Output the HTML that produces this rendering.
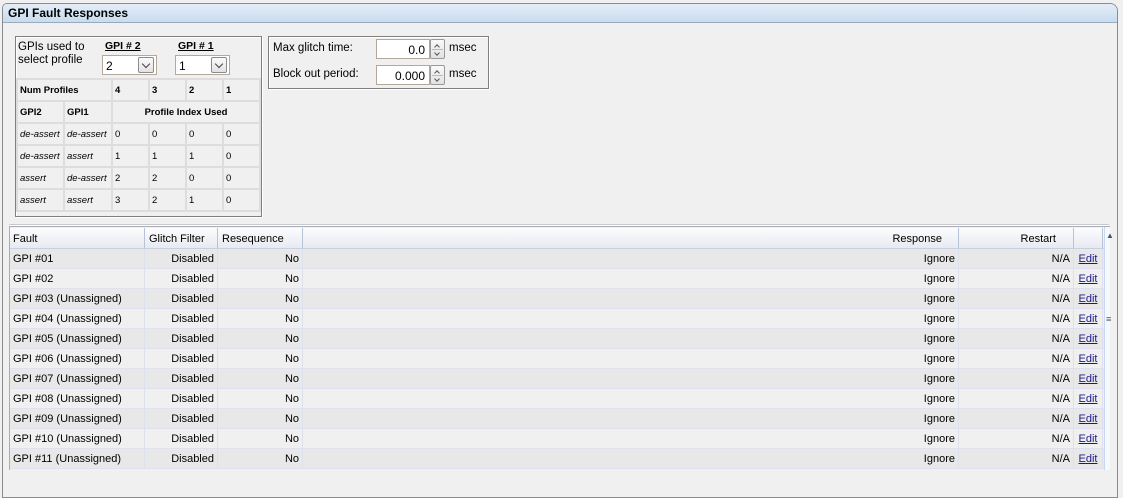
<!DOCTYPE html>
<html><head><meta charset="utf-8"><style>
*{box-sizing:border-box;margin:0;padding:0}
body{width:1123px;height:492px;background:#f0f0f0;font-family:"Liberation Sans",sans-serif;font-size:11px;color:#000;position:relative;overflow:hidden}
.abs{position:absolute}
#panel{left:2px;top:3px;width:1116px;height:495px;border:1px solid #8c8c8c;border-radius:5px 8px 0 0;background:#f0f0f0}
#title{left:3px;top:4px;width:1114px;height:19px;background:linear-gradient(#e4eef8,#c9dcef);border-bottom:1px solid #9aaabb;border-radius:4px 7px 0 0;font-weight:bold;font-size:12px;padding:2px 0 0 5px}
.box{border:1px solid #808080;box-shadow:inset 1px 1px 0 #fff,1px 1px 0 #fff}
.combo{border:1px solid #b4a89c;background:#fff;height:20px}
.combo span{position:absolute;left:3px;top:3px;font-size:12px}
.combo i{position:absolute;right:2px;top:1px;width:16px;height:16px;border:1px solid #8b8b8b;border-radius:2px;background:linear-gradient(#fafafa,#e2e2e2)}
.combo i:after{content:"";position:absolute;left:4px;top:3px;width:5px;height:5px;border-right:1px solid #444;border-bottom:1px solid #444;transform:rotate(45deg)}
table.g{border-collapse:collapse;position:absolute;table-layout:fixed}
table.g td{border:2px solid #ddd;font-size:9.5px;padding:0 2px;height:22px;vertical-align:middle;white-space:nowrap;overflow:hidden}
.spin{border:1px solid #b4a89c;background:#fff;height:20px;text-align:right;padding:3px 4px 0 0;font-size:12px}
.sb{width:15px;height:20px;border:1px solid #999;border-radius:2px;background:linear-gradient(#fafafa,#e2e2e2)}
.sb:before{content:"";position:absolute;left:4px;top:5px;width:3px;height:3px;border-left:1px solid #555;border-top:1px solid #555;transform:rotate(45deg)}
.sb:after{content:"";position:absolute;left:4px;top:11px;width:3px;height:3px;border-right:1px solid #555;border-bottom:1px solid #555;transform:rotate(45deg)}
.sb b{position:absolute;left:1px;right:1px;top:9px;border-top:1px solid #bbb}
#grid{left:10px;top:228px;width:1094px}
.row{position:relative;height:20px;border-bottom:1px solid #e0e0f0}
.row div{position:absolute;top:0;height:20px;line-height:21px;border-right:1px solid #dde0ee}
.hdr{height:21px;background:linear-gradient(#fcfcfd,#e8eaf2);border-bottom:1px solid #c8cfe0}
.hdr div{border-right:1px solid #b8c2d8;line-height:22px}
.c1{left:0;width:135px;padding-left:3px}
.c2{left:135px;width:73px;text-align:right;padding-right:3px}
.c3{left:208px;width:85px;text-align:right;padding-right:3px}
.c4{left:293px;width:656px;text-align:right;padding-right:3px}
.c5{left:949px;width:115px;text-align:right;padding-right:3px}
.c6{left:1064px;width:29px;text-align:center}
.hdr .c2,.hdr .c3{text-align:left;padding-left:4px}
.hdr .c4{padding-right:16px}
.hdr .c5{padding-right:17px}
a{color:#1a1a8c;text-decoration:underline}
</style></head><body>
<div id="panel" class="abs"></div>
<div id="title" class="abs">GPI Fault Responses</div>

<div class="abs box" style="left:15px;top:36px;width:247px;height:181px"></div>
<div class="abs" style="left:18px;top:41px;line-height:13px;font-size:11.5px">GPIs used to<br>select profile</div>
<div class="abs" style="left:105px;top:40px;font-weight:bold;text-decoration:underline;font-size:10.5px">GPI # 2</div>
<div class="abs" style="left:178px;top:40px;font-weight:bold;text-decoration:underline;font-size:10.5px">GPI # 1</div>
<div class="abs combo" style="left:102px;top:55px;width:55px"><span>2</span><i></i></div>
<div class="abs combo" style="left:175px;top:55px;width:55px"><span>1</span><i></i></div>
<table class="g" style="left:16px;top:78px;width:243px">
<colgroup><col style="width:47px"><col style="width:48px"><col style="width:37px"><col style="width:37px"><col style="width:37px"><col style="width:37px"></colgroup>
<tr><td colspan="2" style="font-weight:bold">Num Profiles</td><td style="font-weight:bold">4</td><td style="font-weight:bold">3</td><td style="font-weight:bold">2</td><td style="font-weight:bold">1</td></tr>
<tr><td style="font-weight:bold">GPI2</td><td style="font-weight:bold">GPI1</td><td colspan="4" style="font-weight:bold;text-align:center">Profile Index Used</td></tr>
<tr><td><i>de-assert</i></td><td><i>de-assert</i></td><td>0</td><td>0</td><td>0</td><td>0</td></tr>
<tr><td><i>de-assert</i></td><td><i>assert</i></td><td>1</td><td>1</td><td>1</td><td>0</td></tr>
<tr><td><i>assert</i></td><td><i>de-assert</i></td><td>2</td><td>2</td><td>0</td><td>0</td></tr>
<tr><td><i>assert</i></td><td><i>assert</i></td><td>3</td><td>2</td><td>1</td><td>0</td></tr>
</table>

<div class="abs box" style="left:268px;top:36px;width:221px;height:53px"></div>
<div class="abs" style="left:273px;top:42px;font-size:11.5px">Max glitch time:</div>
<div class="abs" style="left:273px;top:68px;font-size:11.5px">Block out period:</div>
<div class="abs spin" style="left:376px;top:39px;width:54px">0.0</div>
<div class="abs spin" style="left:376px;top:65px;width:54px">0.000</div>
<div class="abs sb" style="left:430px;top:39px"><b></b></div>
<div class="abs sb" style="left:430px;top:65px"><b></b></div>
<div class="abs" style="left:449px;top:42px;font-size:11.5px">msec</div>
<div class="abs" style="left:449px;top:68px;font-size:11.5px">msec</div>

<div class="abs" style="left:9px;top:224px;width:1100px;border-top:1px solid #c8c8c8;border-bottom:1px solid #fff"></div>
<div class="abs" style="left:9px;top:226px;width:1101px;height:244px;border-left:1px solid #aab;border-top:1px solid #aab"></div>
<div class="abs" style="left:1104px;top:227px;width:6px;height:243px;background:#f4f8ff;border-left:1px solid #c8d8f0"></div>
<div class="abs" style="left:1106px;top:231px;font-size:8px;color:#456">▲</div>
<div class="abs" style="left:1106px;top:314px;font-size:9px;color:#456">≡</div>
<div id="grid" class="abs">
<div class="row hdr"><div class="c1">Fault</div><div class="c2">Glitch Filter</div><div class="c3">Resequence</div><div class="c4">Response</div><div class="c5">Restart</div><div class="c6"></div></div>
<div id="rows"></div>
</div>
<script>
var h="";for(var i=1;i<=11;i++){var n=(i<10?"0":"")+i;var f="GPI #"+n+(i>2?" (Unassigned)":"");var bg=i%2?"#e8e8e8":"#f0f0f0";
h+='<div class="row" style="background:'+bg+'"><div class="c1">'+f+'</div><div class="c2">Disabled</div><div class="c3">No</div><div class="c4">Ignore</div><div class="c5">N/A</div><div class="c6"><a>Edit</a></div></div>';}
document.getElementById("rows").innerHTML=h;
</script>
</body></html>
